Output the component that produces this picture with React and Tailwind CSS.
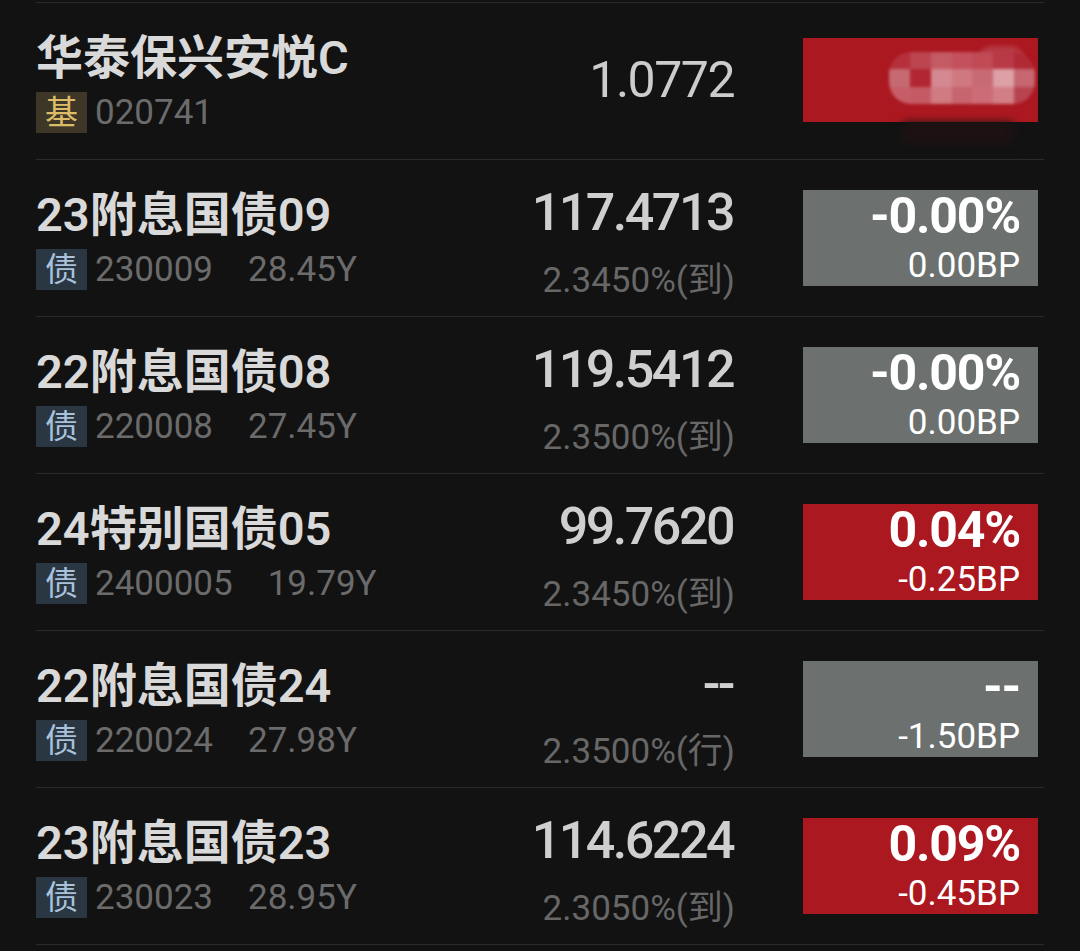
import React from "react";

const FONT = { fontFamily: 'Roboto, "Noto Sans CJK SC", sans-serif' };

const rows = [
  { name: "华泰保兴安悦C", tag: "基", code: "020741", price: "1.0772", fund: true },
  { name: "23附息国债09", tag: "债", code: "230009", years: "28.45Y", price: "117.4713", yld: "2.3450%(到)", pct: "-0.00%", bp: "0.00BP", up: false },
  { name: "22附息国债08", tag: "债", code: "220008", years: "27.45Y", price: "119.5412", yld: "2.3500%(到)", pct: "-0.00%", bp: "0.00BP", up: false },
  { name: "24特别国债05", tag: "债", code: "2400005", years: "19.79Y", price: "99.7620", yld: "2.3450%(到)", pct: "0.04%", bp: "-0.25BP", up: true },
  { name: "22附息国债24", tag: "债", code: "220024", years: "27.98Y", price: "--", yld: "2.3500%(行)", pct: "--", bp: "-1.50BP", up: false },
  { name: "23附息国债23", tag: "债", code: "230023", years: "28.95Y", price: "114.6224", yld: "2.3050%(到)", pct: "0.09%", bp: "-0.45BP", up: true },
];

const mosaic = [
  ["#b5303b", "#bb4550", "#c45a64", "#c4505c", "#c04a55", "#b83a46", "#b02a36"],
  ["#c66a72", "#b22633", "#d48890", "#cf7880", "#c86a74", "#dca0a6", "#c66670"],
  ["#c65e68", "#c55a64", "#d07a82", "#c8646e", "#cc6c76", "#d27e86", "#b84450"],
];

function Mosaic() {
  return (
    <div className="absolute left-[86px] top-[14px] w-[146px] h-[52px]">
      <div className="absolute left-[88px] top-[-6px] w-[48px] h-[30px] rounded-full bg-[#b63a44] blur-[2px]" />
      <div className="absolute inset-0 rounded-[22px] overflow-hidden blur-[1.5px] flex flex-col">
        {mosaic.map((r, i) => (
          <div key={i} className="flex flex-1">
            {r.map((c, j) => (
              <div key={j} className="flex-1" style={{ background: c }} />
            ))}
          </div>
        ))}
      </div>
    </div>
  );
}

function Row({ r }) {
  const isBond = r.tag === "债";
  return (
    <div className="flex h-[157px] border-t border-[#2a2a2a] pr-[6px]">
      <div className="flex-1 flex flex-col pt-[31px]">
        <div className="text-[47px] leading-none font-semibold text-[#d9d9d9] whitespace-nowrap">{r.name}</div>
        <div className="flex items-center mt-[11px] h-[41px]">
          <div
            className={
              "w-[51px] h-[41px] flex items-center justify-center text-[33px] leading-none " +
              (isBond ? "bg-[#2b3643] text-[#a9c2dc]" : "bg-[#3e3626] text-[#dcbc68]")
            }
          >
            {r.tag}
          </div>
          <div className="ml-[8px] text-[35px] leading-none text-[#6b6b6b]">{r.code}</div>
          {r.years && <div className="ml-[35px] text-[35px] leading-none text-[#6b6b6b]">{r.years}</div>}
        </div>
      </div>
      {r.fund ? (
        <div className="flex items-center justify-end w-[300px]">
          <div className="text-[50px] leading-none text-[#cccccc] tracking-[-1.5px] pr-[1px] mt-[-2px]">{r.price}</div>
        </div>
      ) : (
        <div className="flex flex-col items-end w-[300px] pt-[27px]">
          <div className="text-[52px] leading-none font-medium text-[#cfcfcf] tracking-[-2.5px] pr-[2px]">{r.price}</div>
          <div className="mt-[24px] text-[35px] leading-none text-[#676767]">{r.yld}</div>
        </div>
      )}
      <div className="flex items-center ml-[68px]">
        {r.fund ? (
          <div className="relative w-[235px] h-[84px] bg-[#ac1820] mt-[-2px]">
            <div className="absolute left-[100px] top-[84px] w-[110px] h-[22px] bg-[#1e1213] blur-[4px]" />
            <Mosaic />
          </div>
        ) : (
          <div
            className={
              "w-[235px] h-[96px] flex flex-col items-end justify-center pr-[18px] pb-[3px] gap-[7px] text-white " +
              (r.up ? "bg-[#ab1820]" : "bg-[#6c716f]")
            }
          >
            <div className="text-[50px] leading-none font-bold tracking-[-1.2px]">{r.pct}</div>
            <div className="text-[35px] leading-none">{r.bp}</div>
          </div>
        )}
      </div>
    </div>
  );
}

export default function App() {
  return (
    <div className="w-[1080px] h-[951px] bg-[#121212] overflow-hidden" style={FONT}>
      <div className="ml-[36px] mr-[36px] pt-[2px]">
        {rows.map((r, i) => (
          <Row key={i} r={r} />
        ))}
        <div className="border-t border-[#2a2a2a]" />
      </div>
    </div>
  );
}
